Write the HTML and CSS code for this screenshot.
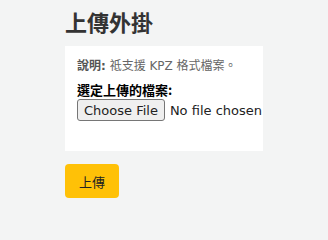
FILE: index.html
```html
<!DOCTYPE html>
<html lang="zh-Hant">
<head>
<meta charset="utf-8">
<link rel="stylesheet" href="styles.css">
</head>
<body>
<main class="main">
  <h1 class="title">上傳外掛</h1>
  <form class="form">
    <div class="panel">
      <p class="hint"><strong>說明:</strong> 祗支援 KPZ 格式檔案。</p>
      <label class="label" for="f">選定上傳的檔案:</label>
      <input class="file" id="f" type="file">
    </div>
    <div class="actions">
      <button class="btn" type="button">上傳</button>
    </div>
  </form>
</main>
</body>
</html>
```
FILE: styles.css
```css
html, body {
  margin: 0;
  padding: 0;
  background: #f3f4f4;
}
body {
  font-family: "DejaVu Sans", "Noto Sans CJK TC", sans-serif;
  color: #333;
  overflow: hidden;
}
.main {
  padding: 6px 0 0 65px;
  width: 198px;
}
.title {
  margin: 0 0 10px 0;
  font-family: "Noto Sans CJK TC", sans-serif;
  font-size: 22px;
  font-weight: 700;
  line-height: 30px;
  color: #333;
}
.form {
  margin: 0;
}
.panel {
  background: #fff;
  padding: 12px 12px 30px 12px;
  overflow: hidden;
}
.hint {
  margin: 0 0 8px 0;
  font-size: 12px;
  line-height: 16px;
  color: #666;
  font-family: "DejaVu Sans", "Noto Sans CJK TC", sans-serif;
  white-space: nowrap;
}
.hint strong {
  color: #555;
}
.label {
  display: block;
  font-family: "Noto Sans CJK TC", sans-serif;
  font-size: 13px;
  font-weight: 700;
  line-height: 16px;
  color: #000;
}
.file {
  display: block;
  font-family: "DejaVu Sans", sans-serif;
  font-size: 13px;
  line-height: 22px;
  height: 22px;
  margin: 1px 0 0 0;
  white-space: nowrap;
  color: #222;
}
.file::file-selector-button {
  font-family: "DejaVu Sans", sans-serif;
  font-size: 13px;
  height: 22px;
  padding: 0 6px;
  margin: 0 5px 0 0;
  border: 1px solid #767676;
  border-radius: 3px;
  background: #efefef;
  color: #222;
}
.actions {
  padding-top: 13px;
}
.btn {
  background: #ffc107;
  border: none;
  border-radius: 4px;
  width: 54px;
  height: 34px;
  font-family: "Noto Sans CJK TC", sans-serif;
  font-size: 13px;
  color: #222;
  padding: 0;
}
```
